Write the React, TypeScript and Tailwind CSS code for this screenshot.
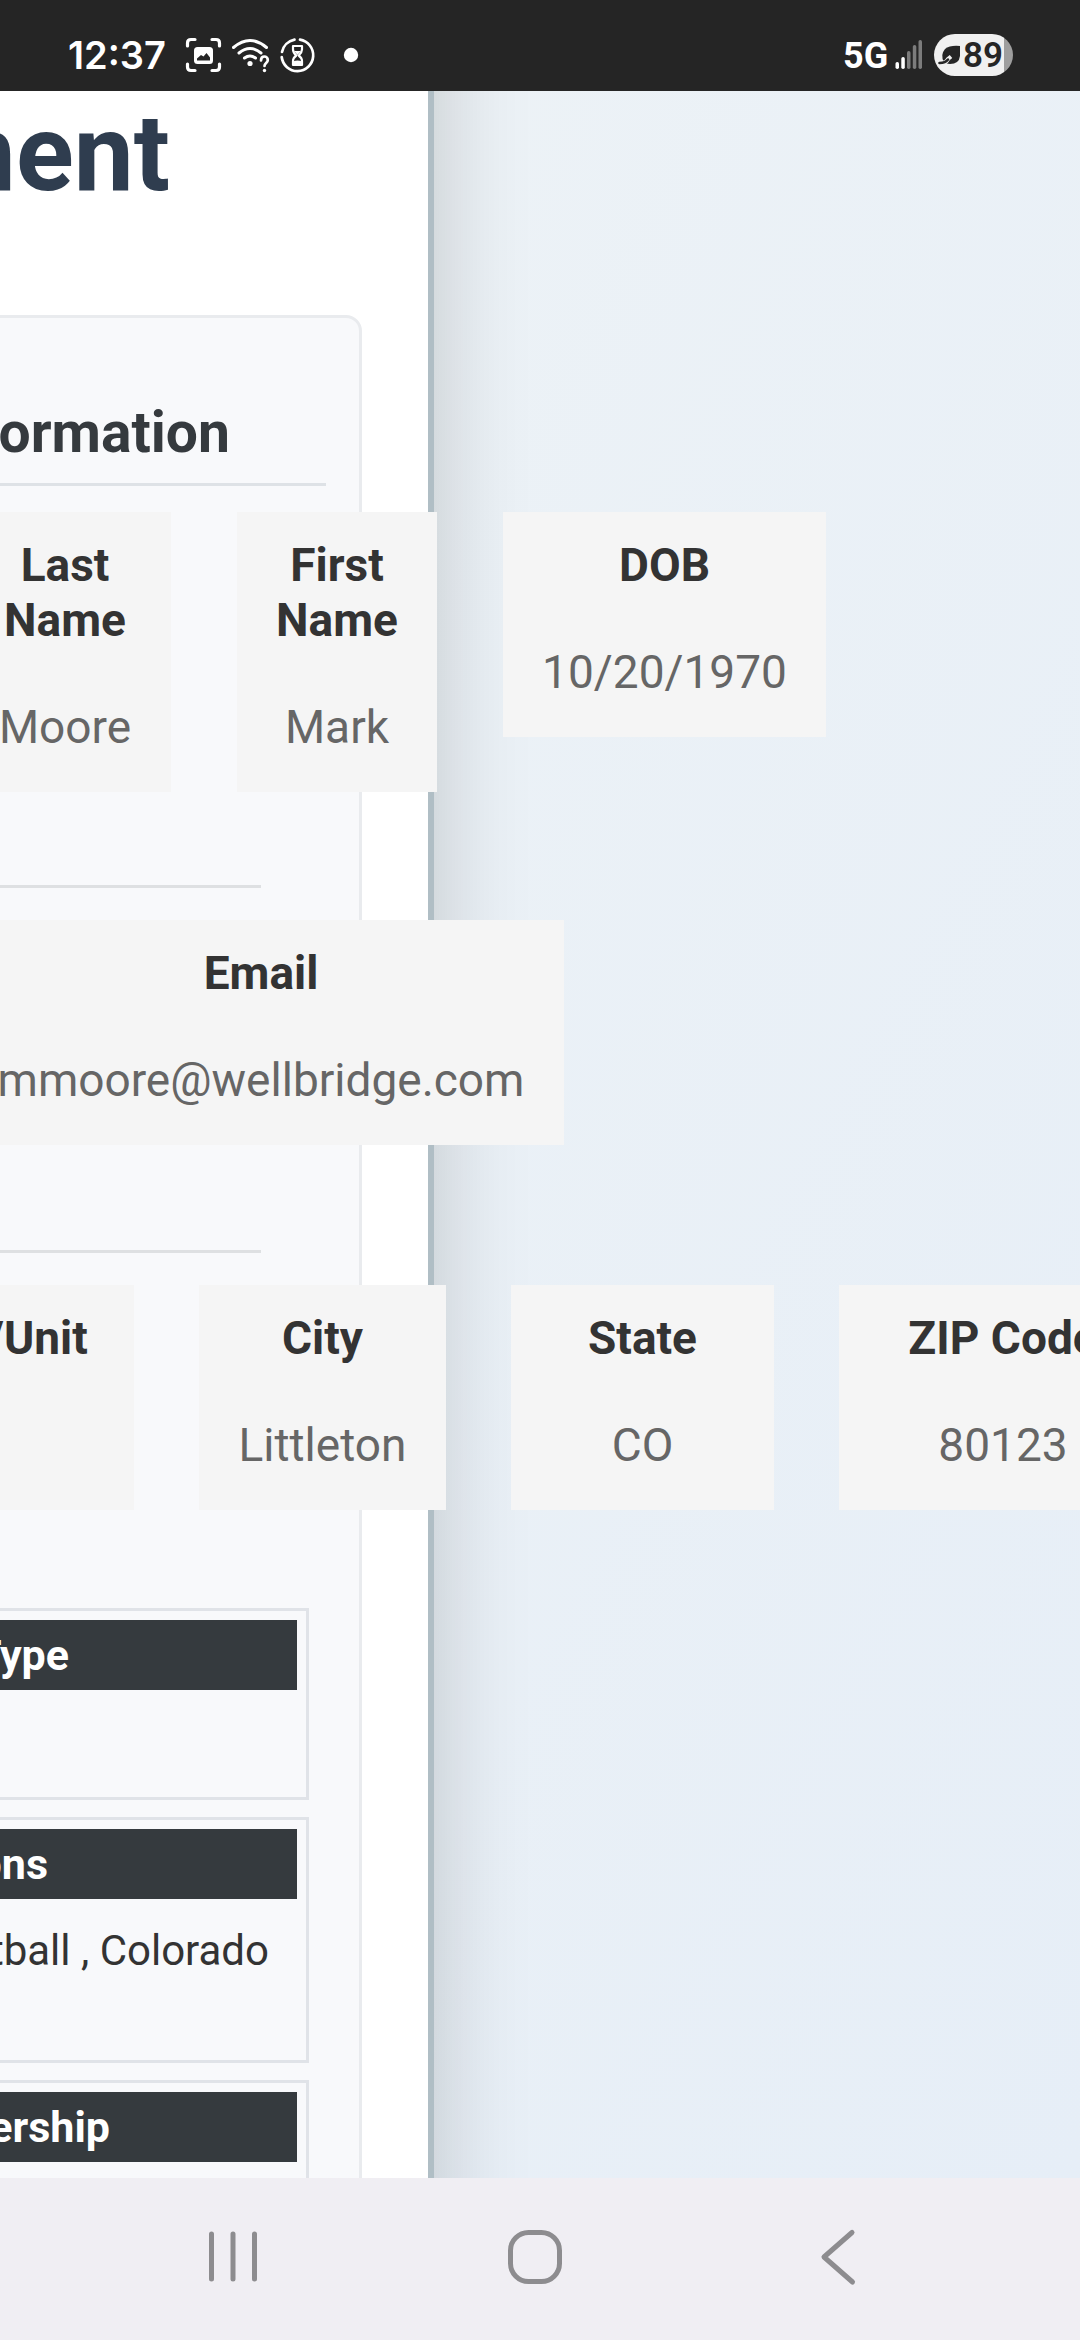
import React from "react";

function StatusBar() {
  return (
    <header className="relative z-20 flex h-[91px] shrink-0 items-start bg-[#252525] text-white">
      <span className="ml-[68px] mt-[32px] w-[117px] whitespace-nowrap font-['Inter'] text-[38px] font-semibold leading-[46px]">12:37</span>
      <svg className="mt-[36px] h-[38px] w-[175px]" viewBox="185 36 175 38" fill="none" stroke="white" strokeLinecap="round" strokeLinejoin="round">
        <g strokeWidth="3.200">
          <path d="M187.500 46V43q0-3.500 3.500-3.500h4M212 39.500h4q3.500 0 3.500 3.500v3M219.500 64v3q0 3.500-3.500 3.500h-4M195 70.500h-4q-3.500 0-3.500-3.500v-3" />
        </g>
        <rect x="194" y="47" width="19" height="17" rx="3.500" fill="white" stroke="none" />
        <path d="M197 60.500v-2l4-3.500 2.500 1.500 3-3.500 3.500 4.500v3z" fill="#252525" stroke="none" />
        <g strokeWidth="3">
          <path d="M233.500 47.500q16.500-14 33 0" />
          <path d="M239 53q11-9 22 0" />
          <path d="M244.500 58q5.500-4 11 0" />
          <path d="M261 60.500c0-5.500 6.800-5 6.800-.5 0 3-3.300 3-3.300 6" strokeWidth="2.700" />
        </g>
        <circle cx="250" cy="63.500" r="2.600" fill="white" stroke="none" />
        <circle cx="264.500" cy="70.500" r="1.700" fill="white" stroke="none" />
        <path d="M300 39.700a15.800 15.800 0 1 1-18.300 17.300M282 52a15.800 15.800 0 0 1 12.500-12.300" strokeWidth="2.700" />
        <path d="M293 46h9v3.500q0 3-3.300 6 3.300 2.500 3.300 5.500V65h-9v-4q0-3 3.300-5.500-3.300-3-3.300-6z" strokeWidth="2.200" />
        <path d="M293 61.500q4.500-2 9 0V65h-9zM294 51h7l-3.500 4z" fill="white" stroke="none" />
        <circle cx="351" cy="55" r="7.200" fill="white" stroke="none" />
      </svg>
      <span className="ml-[483px] mt-[34px] w-[52px] whitespace-nowrap font-['Roboto'] text-[36px] font-bold leading-[44px]">5G</span>
      <svg className="mt-[39px] h-[31px] w-[28px]" viewBox="0 0 28 31">
        <rect x="0.500" y="23" width="3.500" height="7" rx="1.700" fill="white" />
        <rect x="6.300" y="18" width="3.500" height="12" rx="1.700" fill="white" />
        <rect x="12" y="12" width="3.500" height="18" rx="1.700" fill="#7c7c7c" />
        <rect x="17.800" y="6" width="3.500" height="24" rx="1.700" fill="#7c7c7c" />
        <rect x="23.500" y="1" width="3.500" height="29" rx="1.700" fill="#7c7c7c" />
      </svg>
      <div className="ml-[11px] mt-[34px] flex h-[42px] w-[79px] items-center overflow-hidden rounded-full bg-gradient-to-r from-[#f0f0f0] from-[88%] to-[#9e9e9e] to-[88%] pl-[4px] text-[#252525]">
        <svg className="h-[20px] w-[23px]" viewBox="0 0 23 20">
          <path d="M22 1v10q-1 8-10 8-4 0-6-2Q2 10 7 4q5-4 15-3z" fill="#252525" />
          <path d="M1.500 18q6 1 8.500-4l3-2.500" fill="none" stroke="#f0f0f0" strokeWidth="4" />
          <path d="M1.500 18q6 0 8.500-3.500" fill="none" stroke="#252525" strokeWidth="2.600" strokeLinecap="round" />
        </svg>
        <span className="ml-[2px] mt-px font-['Roboto'] text-[35px] font-semibold leading-[42px]">89</span>
      </div>
    </header>
  );
}

type FieldProps = { label: React.ReactNode; value: string; width: string };

function Field({ label, value, width }: FieldProps) {
  return (
    <div className={`shrink-0 bg-[#f5f5f5] pt-[26px] text-center text-[46px] leading-[55px] ${width}`}>
      <div className="whitespace-nowrap font-bold text-[#333]">{label}</div>
      <div className="mt-[52px] h-[92px] whitespace-nowrap text-[#666]">{value}</div>
    </div>
  );
}

type PanelProps = { title: string; body?: string; height: string; inset: string };

function Panel({ title, body, height, inset }: PanelProps) {
  return (
    <div className={`w-[349px] shrink-0 border-[3px] border-[#e0e3e8] p-[9px] ${height}`}>
      <div className={`flex h-[70px] items-center justify-end whitespace-nowrap bg-[#353a3e] text-[43px] font-bold text-white ${inset}`}>
        {title}
      </div>
      {body && (
        <div className="mt-[26px] flex justify-end whitespace-pre pr-[28px] text-[42px] leading-[52px] text-[#333]">{body}</div>
      )}
    </div>
  );
}

function NavBar() {
  return (
    <nav className="relative z-20 h-[162px] shrink-0 bg-[#f0eef3]">
      <svg className="h-full w-full" viewBox="0 0 1080 162" fill="none" stroke="#8d8c8f" strokeLinecap="round" strokeLinejoin="round" strokeWidth="5">
        <path d="M211.500 56v45M233 56v45M254.500 56v45" />
        <rect x="510.500" y="54.500" width="49" height="49" rx="18" />
        <path d="M852 54.500L824 79l28.500 25" />
      </svg>
    </nav>
  );
}

export default function App() {
  return (
    <div className="flex h-[2340px] w-[1080px] flex-col overflow-hidden font-['Roboto',sans-serif]">
      <StatusBar />
      <main className="h-[2087px] w-full shrink-0 overflow-hidden bg-gradient-to-br from-[#eef3f6] to-[#e6eef7]">
        <article className="-mt-[160px] h-[2600px] w-[434px] border-r-[6px] border-[#b0bec5] bg-white pt-[158px] shadow-[0_0_90px_rgba(0,0,0,0.19)]">
          <h1 className="flex h-[129px] items-center justify-end whitespace-nowrap pr-[258px] text-[107px] font-bold leading-[128px] text-[#2f3d4f]">Agreement</h1>
          <section className="-ml-[20px] mt-[97px] flex h-[2200px] w-[382px] flex-col rounded-tr-[16px] border-[3px] border-[#e9ebee] bg-[#f8f9fb]">
            <h2 className="mt-[81px] flex h-[87px] w-[343px] shrink-0 items-start justify-end whitespace-nowrap border-b-[3px] border-[#dee2e6] pr-[96px] text-[57px] font-bold leading-[68px] text-[#353a3e]">
              Member Information
            </h2>
            <div className="-ml-[24px] mt-[26px] flex w-max items-start gap-[66px]">
              <Field width="w-[212px]" label={<>Last<br />Name</>} value="Moore" />
              <Field width="w-[200px]" label={<>First<br />Name</>} value="Mark" />
              <Field width="w-[323px]" label="DOB" value="10/20/1970" />
            </div>
            <hr className="mt-[93px] w-[278px] shrink-0 border-t-[3px] border-[#dee0e2]" />
            <div className="-ml-[25px] mt-[32px] flex w-max">
              <Field width="w-[606px]" label="Email" value="mmoore@wellbridge.com" />
            </div>
            <hr className="mt-[105px] w-[278px] shrink-0 border-t-[3px] border-[#dee0e2]" />
            <div className="-ml-[114px] mt-[32px] flex w-max gap-[65px]">
              <Field width="w-[265px]" label="Apt/Unit" value="" />
              <Field width="w-[247px]" label="City" value="Littleton" />
              <Field width="w-[263px]" label="State" value="CO" />
              <Field width="w-[328px]" label="ZIP Code" value="80123" />
            </div>
            <div className="-ml-[23px] mt-[98px] flex w-max flex-col gap-[17px]">
              <Panel title="Membership Type" height="h-[192px]" inset="pr-[228px]" />
              <Panel title="Conditions" body="Basketball , Colorado" height="h-[246px]" inset="pr-[249px]" />
              <Panel title="Membership" height="h-[192px]" inset="pr-[187px]" />
            </div>
          </section>
        </article>
      </main>
      <NavBar />
    </div>
  );
}
